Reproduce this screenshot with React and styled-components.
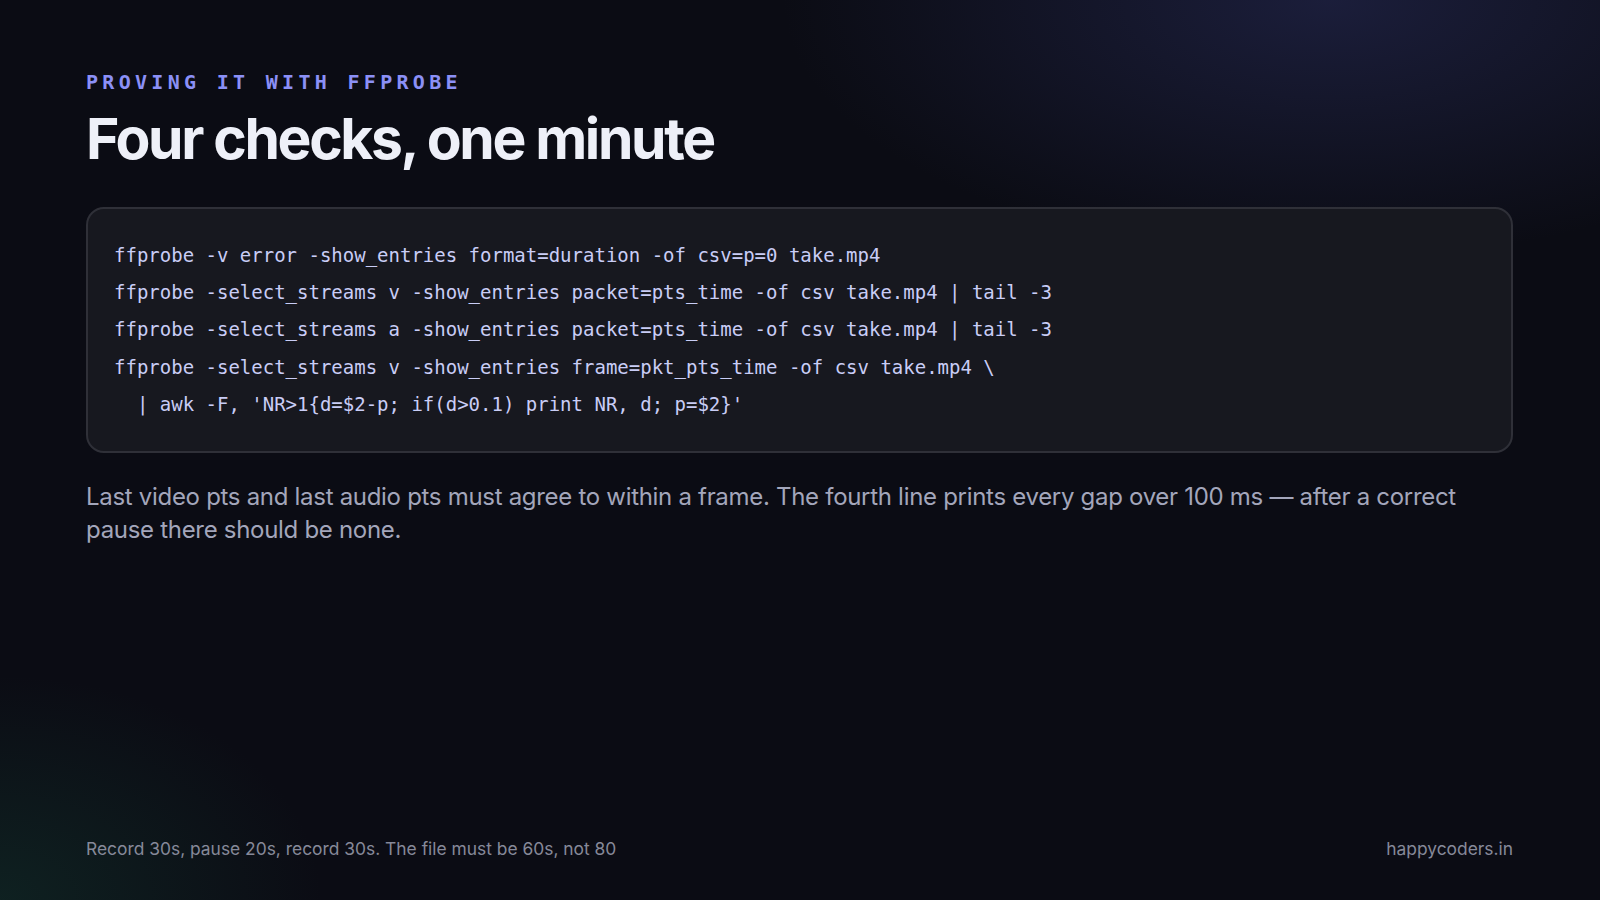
import React from "react";
import styled, { createGlobalStyle } from "styled-components";

const GlobalStyle = createGlobalStyle`
  html, body {
    margin: 0;
    padding: 0;
    background: #0b0c14;
  }
  * {
    box-sizing: border-box;
  }
`;

const lines = [
  "ffprobe -v error -show_entries format=duration -of csv=p=0 take.mp4",
  "ffprobe -select_streams v -show_entries packet=pts_time -of csv take.mp4 | tail -3",
  "ffprobe -select_streams a -show_entries packet=pts_time -of csv take.mp4 | tail -3",
  "ffprobe -select_streams v -show_entries frame=pkt_pts_time -of csv take.mp4 \\",
  "  | awk -F, 'NR>1{d=$2-p; if(d>0.1) print NR, d; p=$2}'",
];

const App = () => {
  return (
    <>
      <GlobalStyle />
      <Slide>
        <Content>
          <Eyebrow>Proving it with ffprobe</Eyebrow>
          <Title>Four checks, one minute</Title>
          <CodeBlock>
            {lines.map((line, i) => (
              <CodeLine key={i}>{line}</CodeLine>
            ))}
          </CodeBlock>
          <Body>
            Last video pts and last audio pts must agree to within a frame. The
            fourth line prints every gap over 100 ms — after a correct pause
            there should be none.
          </Body>
        </Content>
        <Footer>
          <span>Record 30s, pause 20s, record 30s. The file must be 60s, not 80</span>
          <span>happycoders.in</span>
        </Footer>
      </Slide>
    </>
  );
};

const Slide = styled.main`
  width: 1600px;
  height: 900px;
  overflow: hidden;
  display: flex;
  flex-direction: column;
  padding: 68px 87px 39px 86px;
  background:
    radial-gradient(ellipse 760px 360px at 1330px 0px, rgba(40, 44, 90, 0.55), rgba(40, 44, 90, 0) 72%),
    radial-gradient(ellipse 460px 320px at 0px 900px, rgba(20, 64, 52, 0.4), rgba(20, 64, 52, 0) 70%),
    #0b0c14;
  font-family: Inter, "Noto Sans", sans-serif;
`;

const Content = styled.section`
  display: flex;
  flex-direction: column;
  flex: 1;
`;

const Eyebrow = styled.div`
  font-family: "DejaVu Sans Mono", "Liberation Mono", monospace;
  font-weight: 700;
  font-size: 20px;
  line-height: 28px;
  letter-spacing: 4.3px;
  text-transform: uppercase;
  color: #8b90f6;
`;

const Title = styled.h1`
  margin: 8px 0 0;
  font-size: 57px;
  line-height: 70px;
  font-weight: 700;
  letter-spacing: -2.35px;
  color: #eef0f8;
`;

const CodeBlock = styled.pre`
  margin: 33px 0 0;
  padding: 28px 26px;
  background: #17181f;
  border: 2px solid #2f3038;
  border-radius: 18px;
  font-family: "DejaVu Sans Mono", "Liberation Mono", monospace;
  font-size: 19px;
  line-height: 37.2px;
  color: #c9cdf6;
`;

const CodeLine = styled.div`
  white-space: pre;
`;

const Body = styled.p`
  margin: 27px 0 0;
  max-width: 1400px;
  font-size: 24px;
  line-height: 33px;
  letter-spacing: -0.3px;
  color: #a3a6bb;
`;

const Footer = styled.footer`
  display: flex;
  justify-content: space-between;
  align-items: center;
  font-size: 17.4px;
  line-height: 24px;
  color: #868999;
`;

export default App;
